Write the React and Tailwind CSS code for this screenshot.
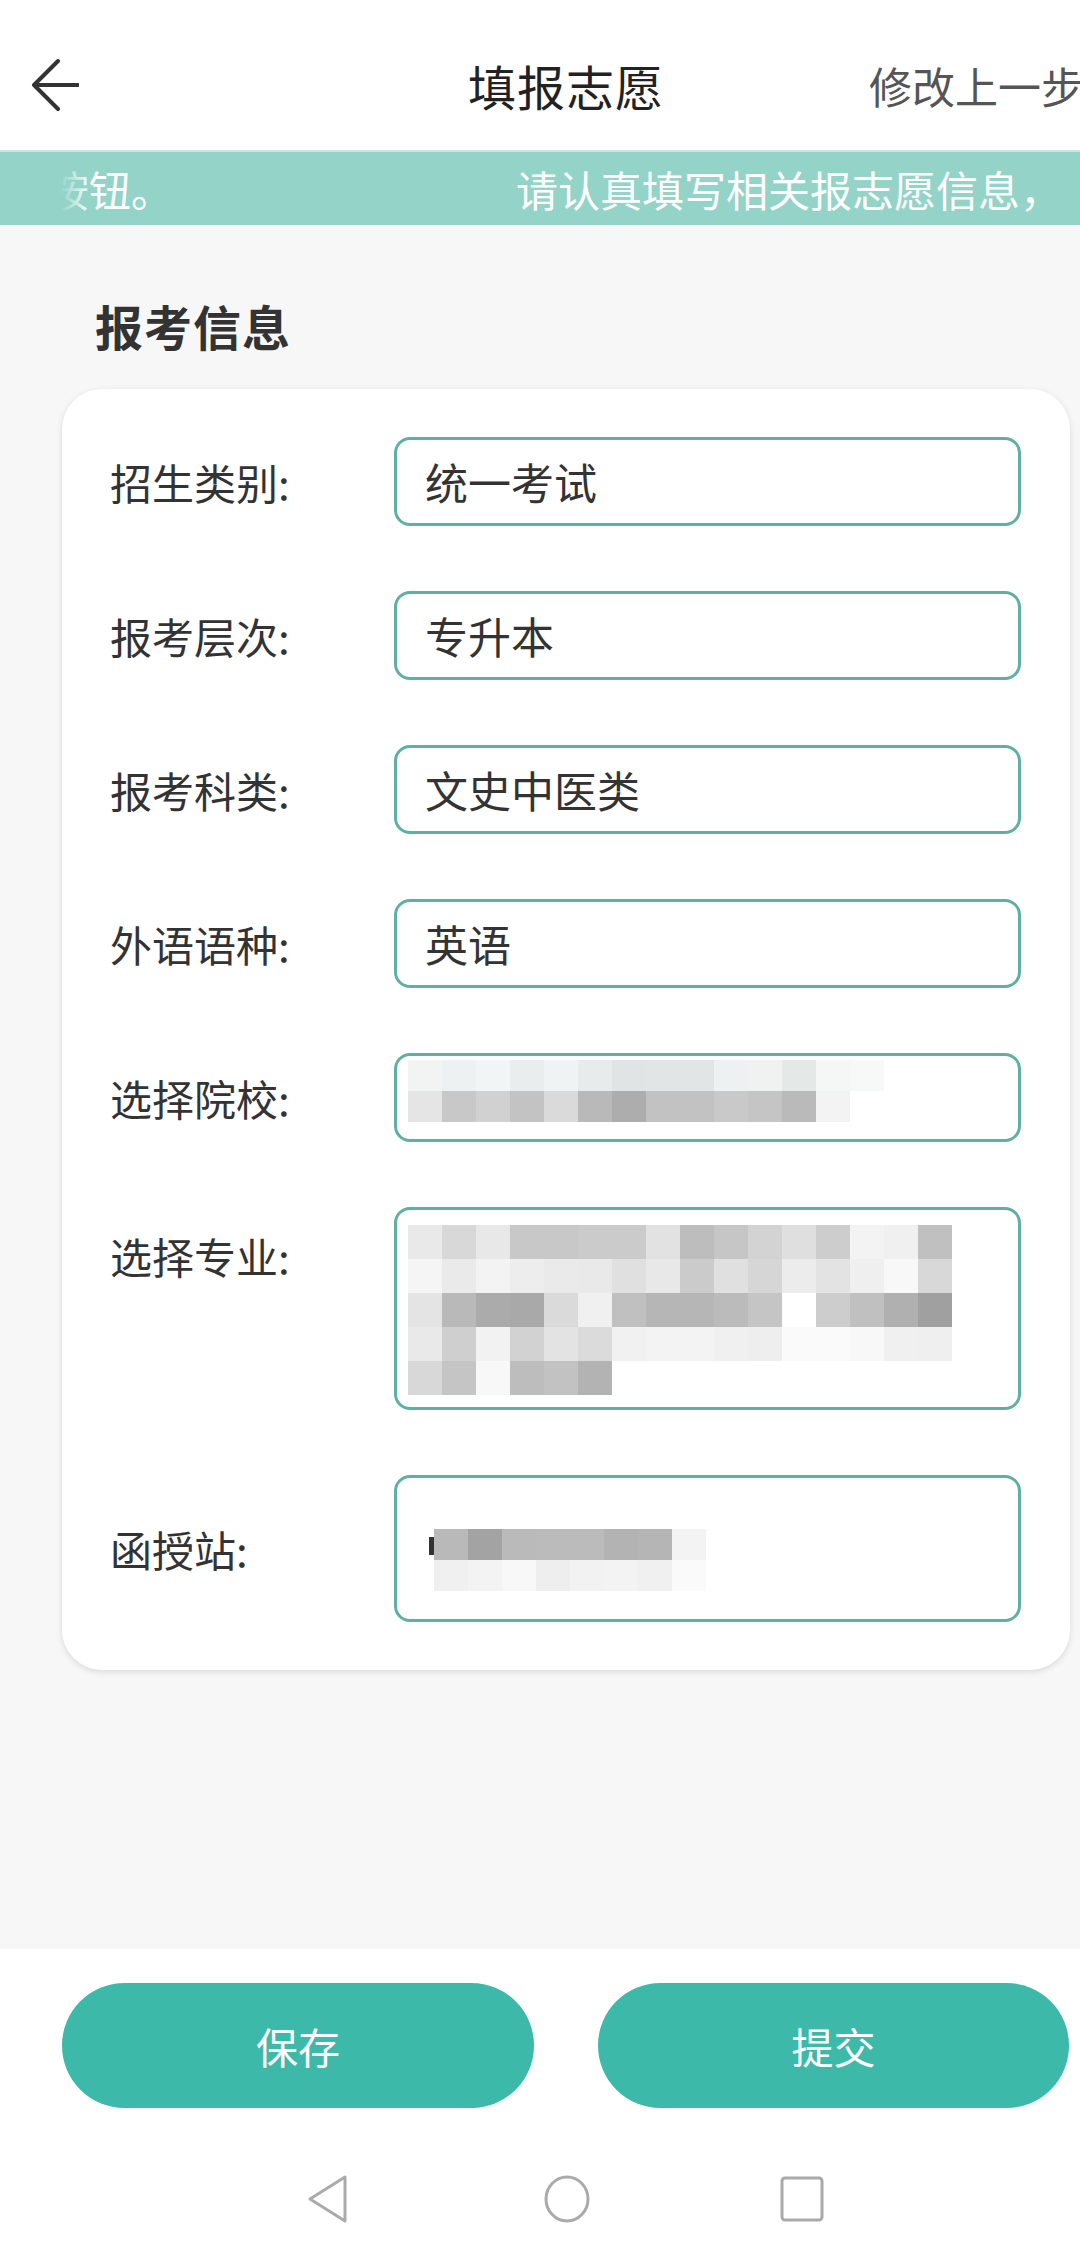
const font = { fontFamily: '"Noto Sans CJK SC", "Noto Sans", sans-serif' };

const mosaicSchool = [
  ['#f2f4f4', '#eef1f1', '#f2f5f5', '#e9eded', '#f0f3f3', '#e8ebeb', '#e0e4e4', '#e1e5e5', '#e1e5e5', '#eef1f1', '#f0f2f2', '#e4e8e7', '#f5f7f7', '#f7f9f9'],
  ['#e5e5e5', '#c8c8c8', '#d1d1d1', '#c3c3c3', '#dadada', '#b9b9b9', '#adadad', '#c2c2c2', '#c2c2c2', '#c9c9c9', '#c5c5c5', '#bababa', '#f3f3f3', '#ffffff'],
];

const mosaicMajor = [
  ['#e9e9e9', '#d8d8d8', '#e8e8e8', '#c8c8c8', '#c8c8c8', '#cbcbcb', '#cbcbcb', '#e2e2e2', '#bdbdbd', '#c6c6c6', '#d3d3d3', '#dfdfdf', '#cdcdcd', '#f3f3f3', '#f0f0f0', '#c0c0c0'],
  ['#f5f5f5', '#eaeaea', '#f3f3f3', '#ededed', '#eaeaea', '#e9e9e9', '#e0e0e0', '#e8e8e8', '#cbcbcb', '#e0e0e0', '#d6d6d6', '#ececec', '#e3e3e3', '#efefef', '#f8f8f8', '#d8d8d8'],
  ['#e4e4e4', '#b9b9b9', '#ababab', '#a9a9a9', '#dadada', '#f0f0f0', '#c0c0c0', '#b6b6b6', '#b6b6b6', '#bbbbbb', '#c5c5c5', '#ffffff', '#cdcdcd', '#c0c0c0', '#b0b0b0', '#a0a0a0'],
  ['#e9e9e9', '#cfcfcf', '#f2f2f2', '#d2d2d2', '#e3e3e3', '#dbdbdb', '#f1f1f1', '#f3f3f3', '#f3f3f3', '#f0f0f0', '#eeeeee', '#fafafa', '#fafafa', '#f8f8f8', '#f0f0f0', '#efefef'],
  ['#d8d8d8', '#c5c5c5', '#f8f8f8', '#bdbdbd', '#c2c2c2', '#b3b3b3'],
];

const mosaicStation = [
  ['#b9b9b9', '#a3a3a3', '#bababa', '#bbbbbb', '#bbbbbb', '#b3b3b3', '#b5b5b5', '#f3f3f3'],
  ['#f0f0f0', '#f3f3f3', '#f8f8f8', '#eeeeee', '#f2f2f2', '#f3f3f3', '#f0f0f0', '#fafafa'],
];

function Mosaic({ rows, cell = 34, rowHeight = 34 }) {
  const cols = Math.max(...rows.map((r) => r.length));
  return (
    <svg width={cols * cell} height={rows.length * rowHeight} className="block">
      {rows.map((row, ri) =>
        row.map((c, ci) => (
          <rect key={`${ri}-${ci}`} x={ci * cell} y={ri * rowHeight} width={cell} height={rowHeight} fill={c} />
        ))
      )}
    </svg>
  );
}

function Field({ label, children, tall, alignTop }) {
  return (
    <div className={`flex ${alignTop ? 'items-start' : 'items-center'}`}>
      <div className={`w-[284px] shrink-0 text-[42px] leading-[48px] text-[#333] ${alignTop ? 'mt-[25px]' : ''}`}>
        {label}
      </div>
      <div
        className={`w-[627px] rounded-[16px] border-[3px] border-[#5fb0a3] bg-white ${tall || 'h-[89px]'}`}
      >
        {children}
      </div>
    </div>
  );
}

function TextValue({ children }) {
  return <div className="flex h-full items-center pl-[28px] text-[43px] leading-none text-[#333]">{children}</div>;
}

export default function App() {
  return (
    <div className="w-[1080px] h-[2258px] overflow-hidden bg-white" style={font}>
      {/* header */}
      <header className="flex h-[150px] items-center overflow-hidden bg-white pt-[20px]">
        <svg width="79" height="60" viewBox="0 0 79 60" className="shrink-0">
          <path d="M58 6 L34 30 L58 54 M34 30 L78 30" fill="none" stroke="#333" strokeWidth="4" strokeLinecap="round" strokeLinejoin="round" />
        </svg>
        <h1 className="ml-[389px] shrink-0 text-[48px] leading-none tracking-[1px] text-[#222]">填报志愿</h1>
        <span className="ml-[205px] shrink-0 whitespace-nowrap text-[43px] leading-none text-[#555]">修改上一步</span>
      </header>

      {/* notice marquee */}
      <div className="flex h-[75px] items-center overflow-hidden whitespace-nowrap border-t-[2px] border-[#c9e7e2] bg-[#93d3c8] text-[42px] leading-none text-white">
        <span className="ml-[47px] shrink-0">
          <span className="bg-gradient-to-r from-transparent from-30% to-white/90 bg-clip-text text-transparent">按</span>钮。
        </span>
        <span className="ml-[343px] shrink-0">请认真填写相关报志愿信息，</span>
      </div>

      {/* body */}
      <main className="h-[1724px] bg-[#f7f7f7] pt-[72px]">
        <h2 className="pl-[95px] text-[48px] font-bold leading-[56px] tracking-[1px] text-[#333]">报考信息</h2>

        <section className="ml-[62px] mr-[10px] mt-[36px] flex flex-col gap-[65px] rounded-[40px] bg-white py-[48px] pl-[48px] shadow-[0_2px_6px_rgba(0,0,0,0.12)]">
          <Field label="招生类别:">
            <TextValue>统一考试</TextValue>
          </Field>
          <Field label="报考层次:">
            <TextValue>专升本</TextValue>
          </Field>
          <Field label="报考科类:">
            <TextValue>文史中医类</TextValue>
          </Field>
          <Field label="外语语种:">
            <TextValue>英语</TextValue>
          </Field>
          <Field label="选择院校:">
            <div className="pl-[11px] pt-[4px]">
              <Mosaic rows={mosaicSchool} rowHeight={31} />
            </div>
          </Field>
          <Field label="选择专业:" tall="h-[203px]" alignTop>
            <div className="pl-[11px] pt-[15px]">
              <Mosaic rows={mosaicMajor} />
            </div>
          </Field>
          <Field label="函授站:" tall="h-[147px]">
            <div className="flex items-start pl-[32px] pt-[51px]">
              <div className="mt-[8px] h-[18px] w-[5px] bg-[#333]" />
              <Mosaic rows={mosaicStation} rowHeight={31} />
            </div>
          </Field>
        </section>
      </main>

      {/* actions */}
      <div className="flex gap-[64px] pl-[62px] pt-[34px]">
        <button type="button" className="h-[125px] w-[472px] rounded-full bg-[#3cb9a9] text-[42px] text-white">
          保存
        </button>
        <button type="button" className="h-[125px] w-[471px] rounded-full bg-[#3cb9a9] text-[42px] text-white">
          提交
        </button>
      </div>

      {/* system nav */}
      <div className="mt-[66px] flex items-center pl-[306px]">
        <svg width="44" height="50" viewBox="0 0 44 50">
          <path d="M39 3 L39 47 L4 25 Z" fill="none" stroke="#aaa" strokeWidth="3" strokeLinejoin="round" />
        </svg>
        <svg width="48" height="50" viewBox="0 0 48 50" className="ml-[193px]">
          <ellipse cx="24" cy="25" rx="21" ry="22" fill="none" stroke="#aaa" strokeWidth="3" />
        </svg>
        <svg width="44" height="46" viewBox="0 0 44 46" className="ml-[189px]">
          <rect x="2" y="2" width="40" height="42" rx="3" fill="none" stroke="#aaa" strokeWidth="3" />
        </svg>
      </div>
    </div>
  );
}
